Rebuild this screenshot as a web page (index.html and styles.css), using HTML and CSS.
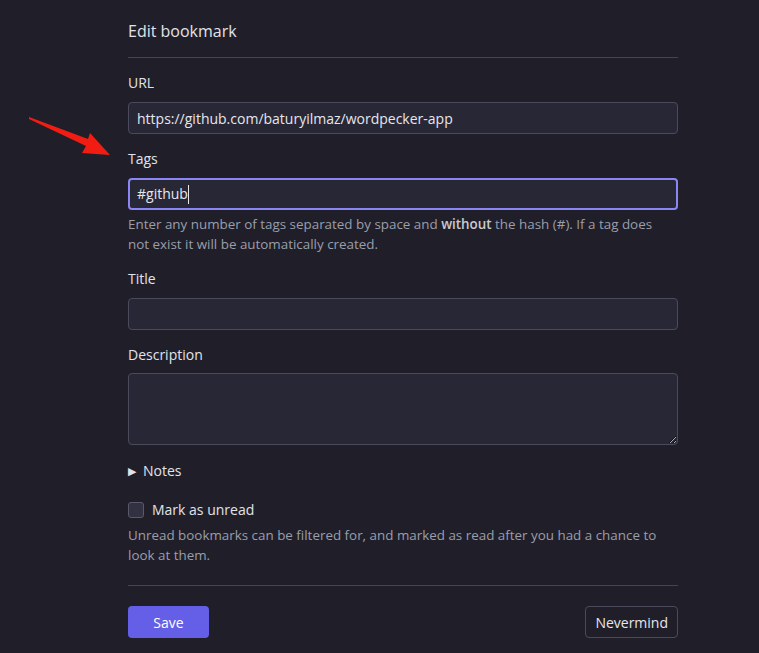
FILE: index.html
```html
<!DOCTYPE html>
<html lang="en">
<head>
  <meta charset="UTF-8" />
  <title>Edit bookmark</title>
  <link rel="stylesheet" href="styles.css">
</head>
<body>

  <svg class="pointer" width="120" height="170" viewBox="0 0 120 170" aria-hidden="true">
    <polygon points="29,117 88,139 90,133 110,155 82,153 86,146 29,119" fill="#f21d12" />
  </svg>

  <main class="page">
    <h1 class="title">Edit bookmark</h1>

    <form class="bookmark-form" autocomplete="off">
      <div class="form-group">
        <label for="url">URL</label>
        <input type="text" id="url" class="field" value="https://github.com/baturyilmaz/wordpecker-app" />
      </div>

      <div class="form-group">
        <label for="tags">Tags</label>
        <div class="field field-focus">#github<span class="caret"></span></div>
        <p class="hint">Enter any number of tags separated by space and <b>without</b> the hash (#). If a tag does not exist it will be automatically created.</p>
      </div>

      <div class="form-group">
        <label for="title">Title</label>
        <input type="text" id="title" class="field" />
      </div>

      <div class="form-group desc-group">
        <label for="description">Description</label>
        <textarea id="description" class="field area"></textarea>
      </div>

      <div class="notes"><span class="tri">&#9654;</span>Notes</div>

      <div class="unread">
        <label class="check"><span class="box"></span>Mark as unread</label>
        <p class="hint">Unread bookmarks can be filtered for, and marked as read after you had a chance to look at them.</p>
      </div>

      <div class="actions">
        <button type="button" class="btn btn-save">Save</button>
        <button type="button" class="btn btn-cancel">Nevermind</button>
      </div>
    </form>
  </main>

</body>
</html>
```

FILE: styles.css
```css
* {
  box-sizing: border-box;
}

body {
  background-color: #201f29;
  font-family: 'Open Sans', sans-serif;
  color: #e2e3e9;
  margin: 0;
  padding: 0;
}

.pointer {
  position: absolute;
  left: 0;
  top: 0;
}

.page {
  width: 550px;
  margin-left: 128px;
  padding-top: 19px;
}

.title {
  margin: 0;
  font-size: 16px;
  font-weight: 400;
  line-height: 24px;
  padding-bottom: 14px;
  border-bottom: 1px solid #45444f;
}

.bookmark-form {
  padding-top: 15px;
}

.form-group {
  margin-bottom: 15px;
}

label {
  display: block;
  font-size: 14px;
  line-height: 20px;
  margin-bottom: 9px;
}

.field {
  display: block;
  width: 100%;
  height: 32px;
  padding: 0 8px;
  background: #282736;
  border: 1px solid #4b4a5d;
  border-radius: 4px;
  color: #e6e6ec;
  font-family: 'Open Sans', sans-serif;
  font-size: 14px;
  line-height: 30px;
  outline: none;
}

.field-focus {
  border: 2px solid #8a86f4;
  padding: 0 7px;
  line-height: 28px;
}

.caret {
  display: inline-block;
  width: 1px;
  height: 19px;
  background: #e6e6ec;
  vertical-align: -5px;
}

.desc-group {
  margin-bottom: 16px;
}

.desc-group label {
  margin-bottom: 8px;
}

.area {
  height: 72px;
  resize: vertical;
}

.hint {
  margin: 4px 0 0;
  padding-right: 12px;
  font-size: 13.4px;
  line-height: 20px;
  color: #9a9eab;
}

.hint b {
  color: #c9cad2;
  font-weight: 600;
}

.notes {
  font-size: 14px;
  line-height: 20px;
  margin-bottom: 19px;
}

.tri {
  font-size: 11px;
  margin-right: 7px;
  vertical-align: 1px;
}

.check {
  display: flex;
  align-items: center;
  gap: 8px;
  margin-bottom: 0;
}

.box {
  width: 16px;
  height: 16px;
  border: 1px solid #5a596c;
  border-radius: 3px;
  background: #323142;
}

.unread .hint {
  margin-top: 5px;
}

.unread {
  margin-bottom: 20px;
  padding-bottom: 20px;
  border-bottom: 1px solid #45444f;
}

.actions {
  display: flex;
  justify-content: space-between;
}

.btn {
  height: 32px;
  border-radius: 4px;
  font-family: 'Open Sans', sans-serif;
  font-size: 14px;
  cursor: pointer;
}

.btn-save {
  width: 81px;
  background: #645fe6;
  border: none;
  color: #fff;
}

.btn-cancel {
  padding: 0 9px;
  background: #201f29;
  border: 1px solid #4b4a5d;
  color: #e6e6ec;
}
```
